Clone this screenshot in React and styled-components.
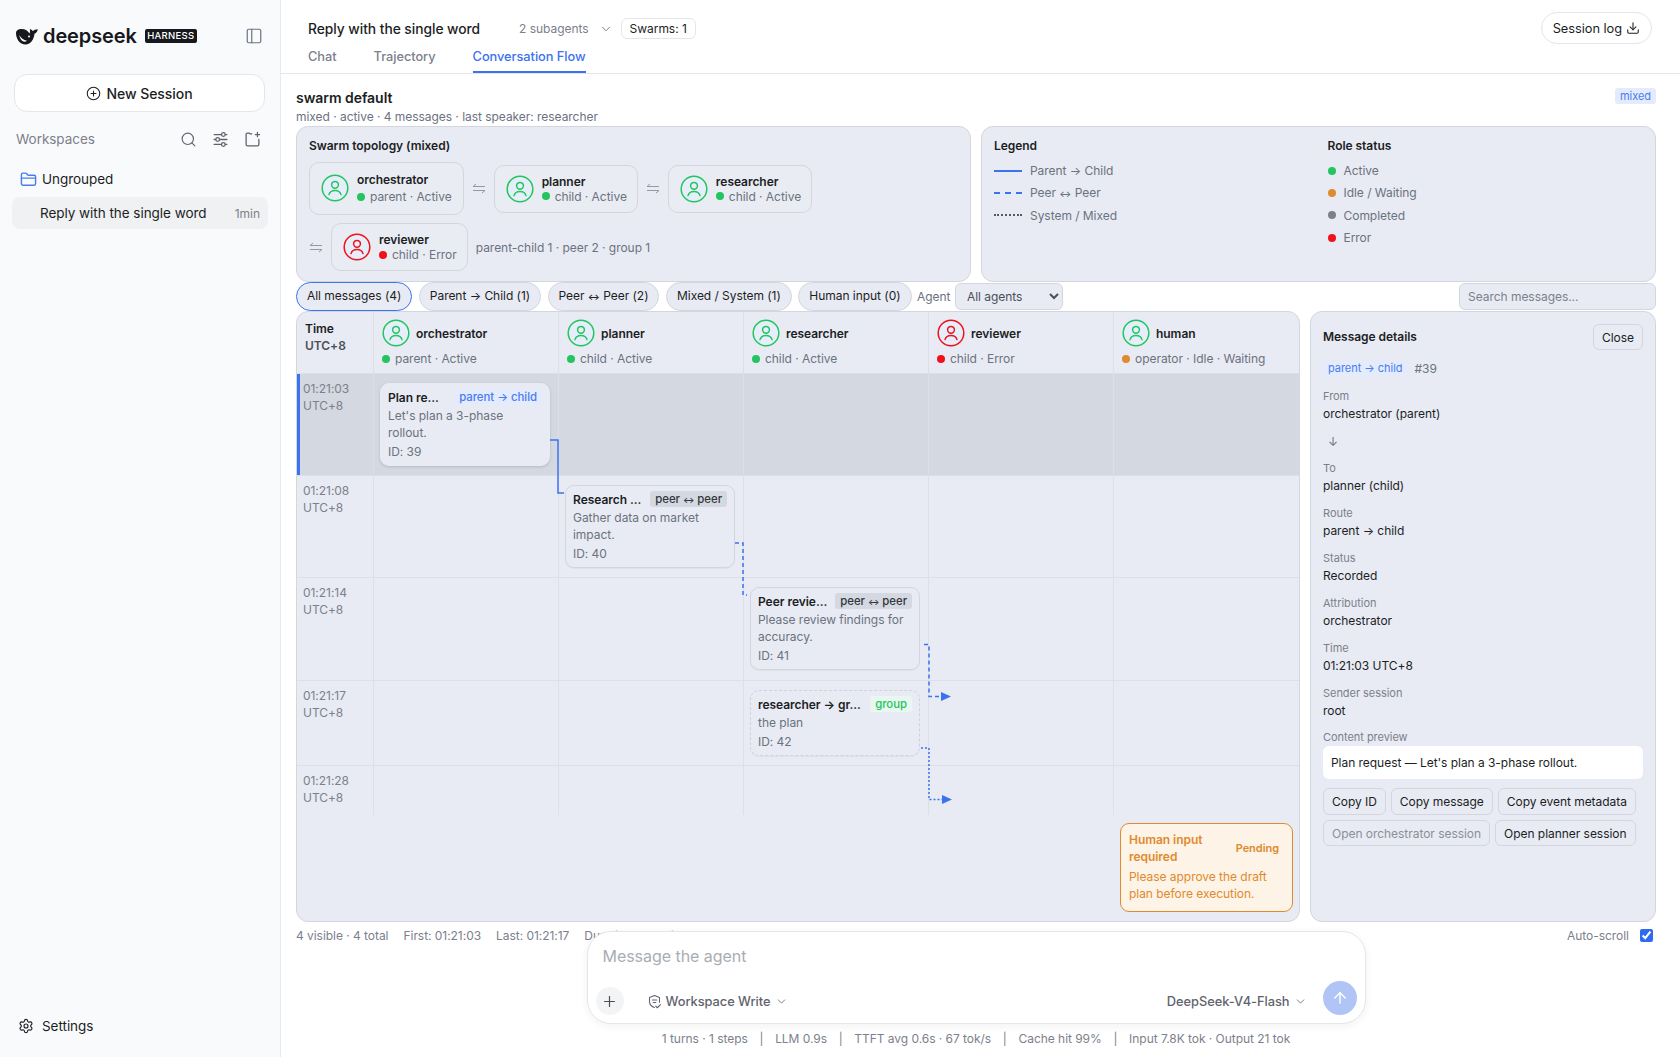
import React from 'react';
import styled, { createGlobalStyle } from 'styled-components';
import {
  ArrowUp,
  ChevronDown,
  CirclePlus,
  Download,
  FolderClosed,
  PanelLeft,
  Plus,
  Search,
  Settings,
} from 'lucide-react';

const BLUE = '#3b72f0';
const GREEN = '#22c55e';
const RED = '#f0121a';
const ORANGE = '#e08a2e';
const GRAY = '#7c808c';
const PANEL = '#e8ebf3';
const LINE = '#d3d6dd';

const Global = createGlobalStyle`
  html, body { margin: 0; height: 100%; overflow: hidden; background: #fff; }
  body { font-family: Inter, "Liberation Sans", sans-serif; color: #1c1e24; font-size: 12px; letter-spacing: -0.04px; }
  button, input, select { letter-spacing: inherit; }
  * { box-sizing: border-box; }
`;

const Page = styled.div`
  display: flex;
  width: 1680px;
  height: 1057px;
`;

/* sidebar */
const Sidebar = styled.aside`
  width: 281px;
  flex: none;
  display: flex;
  flex-direction: column;
  background: #f9fafc;
  border-right: 1px solid #e8e9ec;
`;

const Brand = styled.div`
  display: flex;
  align-items: center;
  height: 18px;
  margin: 27px 17px 0 16px;
`;

const Wordmark = styled.span`
  font-size: 20px;
  font-weight: 600;
  letter-spacing: -0.1px;
  margin-left: 5px;
  line-height: 18px;
  color: #16181d;
`;

const Tag = styled.span`
  margin-left: 8px;
  width: 52px;
  height: 14px;
  border-radius: 2px;
  background: #16181d;
  color: #fff;
  font-size: 9.5px;
  font-weight: 500;
  letter-spacing: 0.3px;
  line-height: 14px;
  text-align: center;
`;

const CollapseBtn = styled.span`
  margin-left: auto;
  display: flex;
  color: #6b7280;
`;

const NewSession = styled.button`
  margin: 29px 15px 0 14px;
  height: 38px;
  border: 1px solid #e5e6ea;
  border-radius: 13px;
  background: #fff;
  font: 500 14px Inter, sans-serif;
  color: #1c1e24;
  display: flex;
  align-items: center;
  justify-content: center;
  gap: 5px;
`;

const WorkspaceHead = styled.div`
  display: flex;
  align-items: center;
  height: 20px;
  margin: 17px 19px 0 16px;
  color: ${GRAY};
  font-size: 13.5px;
`;

const WorkspaceLabel = styled.span`
  flex: 1;
`;

const HeadIcons = styled.span`
  display: flex;
  gap: 15px;
  color: #5f636d;
`;

const GroupRow = styled.div`
  display: flex;
  align-items: center;
  gap: 5px;
  height: 20px;
  margin: 20px 0 0 20px;
  font-size: 13.5px;
`;

const SessionRow = styled.div`
  display: flex;
  align-items: center;
  justify-content: space-between;
  height: 32px;
  margin: 8px 12px 0 12px;
  padding: 0 8px 0 28px;
  border-radius: 8px;
  background: #f0f1f3;
  font-size: 13.5px;
`;

const SessionAge = styled.span`
  font-size: 12px;
  color: ${GRAY};
`;

const SettingsRow = styled.div`
  margin: auto 0 21px 18px;
  display: flex;
  align-items: center;
  gap: 8px;
  font-size: 13.5px;
  height: 20px;
`;

/* main */
const Main = styled.main`
  position: relative;
  flex: 1;
  min-width: 0;
  display: flex;
  flex-direction: column;
`;

const Header = styled.header`
  position: relative;
  height: 74px;
  flex: none;
  border-bottom: 1px solid #e5e6ea;
  padding: 18px 0 0 27px;
`;

const TitleRow = styled.div`
  display: flex;
  align-items: center;
  height: 21px;
`;

const Title = styled.span`
  font-size: 13.8px;
  font-weight: 500;
  margin-right: 39px;
`;

const Subagents = styled.span`
  display: flex;
  align-items: center;
  gap: 10px;
  color: ${GRAY};
  margin-right: 8px;
`;

const SwarmChip = styled.span`
  height: 21px;
  padding: 0 8px;
  border: 1px solid #e5e6ea;
  border-radius: 6px;
  display: flex;
  align-items: center;
`;

const SessionLog = styled.button`
  position: absolute;
  top: 12px;
  right: 28px;
  height: 32px;
  padding: 0 11px;
  display: flex;
  align-items: center;
  gap: 4px;
  background: #fff;
  border: 1px solid #e5e6ea;
  border-radius: 16px;
  font: 12.8px Inter, sans-serif;
  color: #1c1e24;
`;

const Tabs = styled.nav`
  display: flex;
  gap: 37px;
  margin-top: 6px;
`;

const Tab = styled.span`
  height: 28px;
  padding-top: 4px;
  font-size: 12.8px;
  font-weight: 500;
  color: ${(p) => (p.$active ? BLUE : GRAY)};
  border-bottom: ${(p) => (p.$active ? `2px solid ${BLUE}` : '0')};
`;

const Content = styled.div`
  flex: 1;
  min-height: 0;
  padding: 14px 24px 0 15px;
  display: flex;
  flex-direction: column;
`;

const SwarmHead = styled.div`
  display: flex;
  justify-content: space-between;
  align-items: flex-start;
  height: 38px;
`;

const SwarmName = styled.div`
  font-size: 14px;
  font-weight: 600;
  line-height: 20px;
`;

const SwarmMeta = styled.div`
  font-size: 12px;
  line-height: 16px;
  margin-top: 1px;
  color: #6b7280;
`;

const Badge = styled.span`
  display: inline-block;
  height: ${(p) => p.$h || 16}px;
  line-height: ${(p) => p.$h || 16}px;
  padding: 0 5px;
  border-radius: 3px;
  font-size: ${(p) => p.$size || 11}px;
  font-weight: ${(p) => (p.$strong ? 500 : 400)};
  white-space: nowrap;
  flex: none;
  color: ${(p) => p.$fg};
  background: ${(p) => p.$bg};
`;

const PeerArrow = styled.span`
  font-size: 0.75em;
  font-weight: 600;
`;

const TopPanels = styled.div`
  display: grid;
  grid-template-columns: 1fr 1fr;
  grid-template-rows: minmax(0, 1fr);
  gap: 10px;
  height: 156px;
  flex: none;
`;

const Panel = styled.section`
  background: ${PANEL};
  border: 1px solid ${LINE};
  border-radius: 12px;
  padding: 11px 12px 0;
`;

const PanelTitle = styled.div`
  font-size: 12px;
  font-weight: 600;
  line-height: 16px;
`;

const Topology = styled.div`
  display: flex;
  flex-wrap: wrap;
  align-items: center;
  gap: 8px;
  margin-top: 8px;
`;

const TopoGroup = styled.div`
  display: flex;
  align-items: center;
  gap: 8px;
`;

const Node = styled.div`
  display: flex;
  align-items: center;
  gap: 8px;
  padding: ${(p) => (p.$tall ? '9px 11px 10px' : '8px 10px 8px 11px')};
  border: 1px solid ${LINE};
  border-radius: 10px;
  background: #e9ecf3;
`;

const NodeText = styled.div`
  display: flex;
  flex-direction: column;
  gap: ${(p) => (p.$tall ? 2 : 0)}px;
  line-height: 15px;
`;

const Name = styled.div`
  font-size: 12px;
  font-weight: 600;
  line-height: 15px;
`;

const Status = styled.div`
  display: flex;
  align-items: center;
  gap: 5px;
  font-size: 12px;
  line-height: 15px;
  color: #6b7280;
  white-space: nowrap;
`;

const Dot = styled.span`
  width: 8px;
  height: 8px;
  border-radius: 50%;
  flex: none;
  background: ${(p) => p.$color};
`;

const TopoSummary = styled.span`
  color: #6b7280;
`;

const LegendGrid = styled.div`
  display: grid;
  grid-template-columns: 1fr 1fr;
  column-gap: 18px;
`;

const LegendList = styled.div`
  display: flex;
  flex-direction: column;
  margin-top: 5.5px;
`;

const LegendItem = styled.div`
  display: flex;
  align-items: center;
  gap: 8px;
  height: 22.3px;
  color: #6b7280;
`;

const LegendLine = styled.span`
  width: 28px;
  border-top: 2px ${(p) => p.$kind} ${(p) => p.$color};
`;

const Filters = styled.div`
  display: flex;
  align-items: center;
  height: 29px;
  flex: none;
  gap: 6.5px;
`;

const Pill = styled.button`
  height: 29px;
  padding: 0 10px 2px;
  border-radius: 14.500px;
  border: 1px solid ${(p) => (p.$active ? BLUE : LINE)};
  background: ${PANEL};
  font: 12px Inter, sans-serif;
  color: #1c1e24;
  white-space: nowrap;
`;

const AgentLabel = styled.span`
  color: #6b7280;
  margin-left: -1px;
`;

const AgentSelect = styled.select`
  width: 108px;
  height: 27px;
  margin-left: -2px;
  padding-left: 7px;
  border: 1px solid ${LINE};
  border-radius: 6px;
  background: ${PANEL};
  font: 12px Inter, sans-serif;
  color: #4b4f58;
`;

const SearchBox = styled.input`
  margin-left: auto;
  width: 197px;
  height: 27px;
  padding: 0 8px 1px;
  border: 1px solid ${LINE};
  border-radius: 6px;
  background: ${PANEL};
  font: 12px Inter, sans-serif;
  &::placeholder { color: #7c808c; opacity: 1; }
`;

const Workspace = styled.div`
  display: grid;
  grid-template-columns: 1004px 346px;
  gap: 10px;
  height: 611px;
  flex: none;
`;

const FlowPanel = styled.section`
  position: relative;
  background: ${PANEL};
  border: 1px solid ${LINE};
  border-radius: 12px;
  overflow: hidden;
`;

const FlowRow = styled.div`
  display: grid;
  grid-template-columns: 77px repeat(5, minmax(0, 1fr));
  height: ${(p) => p.$h}px;
  background: ${(p) => (p.$selected ? '#d4d8e0' : 'transparent')};
  border-bottom: ${(p) => (p.$end ? '0' : '1px solid #dcdfe7')};
`;

const TimeCell = styled.div`
  padding: ${(p) => (p.$head ? '8px 0 0 5px' : '7px 0 0 3px')};
  border-right: 1px solid #dcdfe7;
  border-left: ${(p) => (p.$selected ? `3px solid ${BLUE}` : '3px solid transparent')};
  line-height: ${(p) => (p.$head ? 17 : 16.5)}px;
  color: ${(p) => (p.$head ? '#4b4f58' : GRAY)};
  font-weight: ${(p) => (p.$head ? 600 : 400)};
`;

const TimeHead = styled.div`
  color: #1c1e24;
`;

const HeadCell = styled.div`
  padding: 7px 0 0 8px;
  border-right: ${(p) => (p.$last ? '0' : '1px solid #dcdfe7')};
`;

const HeadTop = styled.div`
  display: flex;
  align-items: center;
  gap: 6px;
  height: 28px;
  margin-bottom: 4px;
`;

const Cell = styled.div`
  min-width: 0;
  padding: 9px 8px 0 6px;
  border-right: ${(p) => (p.$last ? '0' : '1px solid #dcdfe7')};
`;

const MsgCard = styled.article`
  background: ${PANEL};
  border-radius: 9px;
  padding: 5px 7px;
  border: ${(p) => (p.$variant === 'selected' ? `1px solid ${PANEL}` : p.$variant === 'group' ? `1px dashed #cfd2da` : `1.5px solid ${LINE}`)};
  box-shadow: ${(p) => (p.$variant === 'selected' ? '0 1px 3px rgba(40,50,70,.18)' : '0 1px 1px rgba(40,50,70,.05)')};
`;

const MsgTop = styled.div`
  display: flex;
  align-items: center;
  justify-content: space-between;
  gap: 4px;
  margin-bottom: 2px;
`;

const MsgTitle = styled.span`
  font-weight: 600;
  white-space: nowrap;
`;

const MsgBody = styled.div`
  line-height: 17px;
  color: #6b7280;
`;

const MsgId = styled.div`
  line-height: 17px;
  margin-top: 2px;
  color: #6b7280;
`;

const Connectors = styled.svg`
  position: absolute;
  inset: 0;
  width: 100%;
  height: 100%;
  pointer-events: none;
`;

const HumanCard = styled.div`
  position: absolute;
  right: 6px;
  bottom: 9px;
  width: 173px;
  height: 89px;
  padding: 7px 8px;
  border: 1px solid ${ORANGE};
  border-radius: 9px;
  background: #fdf3e6;
  color: ${ORANGE};
  line-height: 17px;
`;

const HumanTop = styled.div`
  display: flex;
  align-items: center;
  justify-content: space-between;
  margin-bottom: 3px;
`;

const HumanTitle = styled.span`
  width: 96px;
  font-weight: 600;
`;

const Pending = styled.span`
  font-size: 11px;
  font-weight: 600;
  margin-right: 5px;
`;

const Details = styled.section`
  background: ${PANEL};
  border: 1px solid ${LINE};
  border-radius: 12px;
  padding: 12px;
  display: flex;
  flex-direction: column;
  gap: 11.85px;
`;

const DetailsHead = styled.div`
  display: flex;
  align-items: center;
  justify-content: space-between;
  height: 26px;
  margin-bottom: -1px;
`;

const SmallBtn = styled.button`
  height: 26.5px;
  padding: 0 8px;
  border: 1px solid ${LINE};
  border-radius: 6px;
  background: ${PANEL};
  font: 12px Inter, sans-serif;
  color: ${(p) => (p.disabled ? '#8b8f99' : '#1c1e24')};
  white-space: nowrap;
`;

const RouteRow = styled.div`
  display: flex;
  align-items: center;
  gap: 7px;
  color: #6b7280;
  margin-bottom: 1px;
`;

const FieldLabel = styled.div`
  font-size: 11px;
  line-height: 15px;
  color: ${GRAY};
  margin-bottom: 1px;
`;

const FieldValue = styled.div`
  line-height: 17px;
`;

const ArrowDown = styled.div`
  height: 16px;
  line-height: 15px;
  padding-left: 5px;
  color: #6b7280;
`;

const Preview = styled.div`
  height: 33px;
  padding: 0 8px;
  border-radius: 6px;
  background: #fff;
  line-height: 33px;
`;

const Actions = styled.div`
  display: flex;
  flex-wrap: wrap;
  gap: 5px;
  margin-top: -3px;
`;

const StatusBar = styled.div`
  display: flex;
  align-items: center;
  gap: 15px;
  height: 16px;
  margin-top: 5px;
  flex: none;
  color: ${GRAY};
`;

const LiveWord = styled.span`
  color: ${GREEN};
`;

const AutoScroll = styled.label`
  margin-left: auto;
  display: flex;
  align-items: center;
  gap: 11px;
  margin-right: 3px;
`;

const Check = styled.input`
  width: 13px;
  height: 13px;
  margin: 0;
  accent-color: #2f6bf0;
`;

const Dock = styled.div`
  position: absolute;
  left: 15px;
  right: 24px;
  bottom: 10px;
  display: flex;
  flex-direction: column;
  align-items: center;
`;

const Composer = styled.div`
  width: 779px;
  height: 93px;
  padding: 12px 8px 8px;
  background: #fff;
  border: 1px solid #e5e6ea;
  border-radius: 24px;
  box-shadow: 0 2px 8px rgba(30, 40, 60, 0.06);
  display: flex;
  flex-direction: column;
  justify-content: space-between;
`;

const Prompt = styled.input`
  border: 0;
  outline: 0;
  padding: 0 7px;
  height: 24px;
  font: 16px Inter, sans-serif;
  &::placeholder { color: #a9adb5; opacity: 1; }
`;

const ComposerBar = styled.div`
  display: flex;
  align-items: center;
`;

const AddBtn = styled.span`
  width: 28px;
  height: 28px;
  margin-top: 2px;
  border-radius: 50%;
  background: #f3f4f6;
  display: flex;
  align-items: center;
  justify-content: center;
  color: #4b4f58;
`;

const Selector = styled.span`
  display: flex;
  align-items: center;
  gap: 4px;
  margin-top: 2px;
  margin-left: ${(p) => p.$ml};
  font-size: 12.85px;
  font-weight: 500;
  color: #5f636d;
`;

const Send = styled.span`
  width: 34px;
  height: 34px;
  margin-left: 16px;
  margin-top: -4px;
  border-radius: 50%;
  background: #b0c4f5;
  color: #fff;
  display: flex;
  align-items: center;
  justify-content: center;
`;

const Stats = styled.div`
  display: flex;
  gap: 11.7px;
  margin-top: 7px;
  line-height: 16px;
  color: ${GRAY};
`;

const Glyph = styled.svg`
  flex: none;
`;

/* drawings */
const Avatar = ({ color }) => (
  <Glyph width="28" height="28" viewBox="0 0 28 28" fill="none">
    <circle cx="14" cy="14" r="12.8" fill="#e7eefb" stroke={color} strokeWidth="1.5" />
    <circle cx="14" cy="10.8" r="3.4" stroke={color} strokeWidth="1.5" />
    <path d="M8 20.6c.8-2.6 3.1-4 6-4s5.200 1.400 6 4" stroke={color} strokeWidth="1.5" strokeLinecap="round" />
  </Glyph>
);

const Whale = () => (
  <Glyph width="22" height="17" viewBox="0 0 22 17">
    <path
      d="M0 5C0 2.500 2.500 1 5.500 1c3.800 0 6.500 1.800 8 4.500.6-1.200.7-2.800.3-4.500 1.300.3 2.300 1 3 2 .9-.9 2.700-1.700 5-1.800-.3 2-1.400 3.500-3.300 4.600C18 11 15 16.500 9.500 16.500 3.800 16.500 0 11 0 5Z"
      fill="#16181d"
    />
    <path d="M3.200 7c1.700 3 4.200 5 7.800 5.700-.9.9-2.200 1.200-3.500.9C5.400 13 3.800 10.200 3.200 7Z" fill="#f9fafc" />
    <circle cx="13" cy="8.600" r="1" fill="#f9fafc" />
  </Glyph>
);

const Sliders = () => (
  <Glyph width="17" height="17" viewBox="0 0 24 24" fill="none" stroke="currentColor" strokeWidth="1.8" strokeLinecap="round">
    <path d="M3 5h10M19 5h2M3 12h2M11 12h10M3 19h10M19 19h2" />
    <circle cx="16" cy="5" r="2.600" />
    <circle cx="8" cy="12" r="2.600" />
    <circle cx="16" cy="19" r="2.600" />
  </Glyph>
);

const AddFolder = () => (
  <Glyph width="17" height="17" viewBox="0 0 24 24" fill="none" stroke="currentColor" strokeWidth="1.8" strokeLinecap="round" strokeLinejoin="round">
    <path d="M11 4H8.500L7 3H5a2 2 0 0 0-2 2v14a2 2 0 0 0 2 2h14a2 2 0 0 0 2-2v-7" />
    <path d="M19 2v6M16 5h6" />
  </Glyph>
);

const SwapArrows = () => (
  <Glyph width="14" height="11" viewBox="0 0 14 11" fill="none" stroke="#9498a3" strokeWidth="1">
    <path d="M1 3.500h12M1 3.500 4 1M13 7.500H1M13 7.500l-3 2.500" />
  </Glyph>
);

const ShieldMark = () => (
  <Glyph width="15" height="15" viewBox="0 0 24 24" fill="none" stroke="currentColor" strokeWidth="1.7" strokeLinecap="round" strokeLinejoin="round">
    <path d="M12 21.500c-4.500-1.500-8-4.800-8-10v-6l8-3 8 3V13" />
    <path d="M8.500 9.500h7M10 13.500h4M14 19.500l2.500 2.500 5-5" />
  </Glyph>
);

const HEAD = [
  { name: 'orchestrator', status: 'parent · Active', avatar: GREEN, dot: GREEN },
  { name: 'planner', status: 'child · Active', avatar: GREEN, dot: GREEN },
  { name: 'researcher', status: 'child · Active', avatar: GREEN, dot: GREEN },
  { name: 'reviewer', status: 'child · Error', avatar: RED, dot: RED },
  { name: 'human', status: 'operator · Idle · Waiting', avatar: GREEN, dot: ORANGE },
];

const PeerBadge = (
  <>
    peer <PeerArrow>↔</PeerArrow> peer
  </>
);

const ROWS = [
  {
    time: '01:21:03',
    h: 102,
    selected: true,
    col: 0,
    variant: 'selected',
    title: 'Plan re...',
    badge: { text: 'parent → child', fg: '#4a7cf0', bg: '#e3ebfd' },
    body: ["Let's plan a 3-phase", 'rollout.'],
    id: 39,
  },
  {
    time: '01:21:08',
    h: 102,
    col: 1,
    title: 'Research ...',
    badge: { text: PeerBadge, fg: '#33363e', bg: '#d4d8e0' },
    body: ['Gather data on market', 'impact.'],
    id: 40,
  },
  {
    time: '01:21:14',
    h: 103,
    col: 2,
    title: 'Peer revie...',
    badge: { text: PeerBadge, fg: '#33363e', bg: '#d4d8e0' },
    body: ['Please review findings for', 'accuracy.'],
    id: 41,
  },
  {
    time: '01:21:17',
    h: 85,
    col: 2,
    variant: 'group',
    title: 'researcher → gr...',
    badge: { text: 'group', fg: GREEN, bg: '#e9f7f0' },
    body: ['the plan'],
    id: 42,
  },
  { time: '01:21:28', h: 49, end: true },
];

const DETAILS = [
  ['To', 'planner (child)'],
  ['Route', 'parent → child'],
  ['Status', 'Recorded'],
  ['Attribution', 'orchestrator'],
  ['Time', '01:21:03 UTC+8'],
  ['Sender session', 'root'],
];

const Field = ({ label, value }) => (
  <div>
    <FieldLabel>{label}</FieldLabel>
    <FieldValue>{value}</FieldValue>
  </div>
);

const TopoNode = ({ agent, tall }) => (
  <Node $tall={tall}>
    <Avatar color={agent.avatar} />
    <NodeText $tall={tall}>
      <Name>{agent.name}</Name>
      <Status>
        <Dot $color={agent.dot} />
        {agent.status}
      </Status>
    </NodeText>
  </Node>
);

const App = () => (
  <Page>
    <Global />
    <Sidebar>
      <Brand>
        <Whale />
        <Wordmark>deepseek</Wordmark>
        <Tag>HARNESS</Tag>
        <CollapseBtn>
          <PanelLeft size={18} strokeWidth={1.6} />
        </CollapseBtn>
      </Brand>
      <NewSession>
        <CirclePlus size={15} strokeWidth={1.7} />
        New Session
      </NewSession>
      <WorkspaceHead>
        <WorkspaceLabel>Workspaces</WorkspaceLabel>
        <HeadIcons>
          <Search size={17} strokeWidth={1.6} />
          <Sliders />
          <AddFolder />
        </HeadIcons>
      </WorkspaceHead>
      <GroupRow>
        <FolderClosed size={17} strokeWidth={2} color="#4a7cf0" />
        Ungrouped
      </GroupRow>
      <SessionRow>
        Reply with the single word
        <SessionAge>1min</SessionAge>
      </SessionRow>
      <SettingsRow>
        <Settings size={16} strokeWidth={1.7} />
        Settings
      </SettingsRow>
    </Sidebar>

    <Main>
      <Header>
        <TitleRow>
          <Title>Reply with the single word</Title>
          <Subagents>
            2 subagents
            <ChevronDown size={14} strokeWidth={1.7} />
          </Subagents>
          <SwarmChip>Swarms: 1</SwarmChip>
        </TitleRow>
        <Tabs>
          <Tab>Chat</Tab>
          <Tab>Trajectory</Tab>
          <Tab $active>Conversation Flow</Tab>
        </Tabs>
        <SessionLog>
          Session log
          <Download size={14} strokeWidth={1.8} />
        </SessionLog>
      </Header>

      <Content>
        <SwarmHead>
          <div>
            <SwarmName>swarm default</SwarmName>
            <SwarmMeta>mixed · active · 4 messages · last speaker: researcher</SwarmMeta>
          </div>
          <Badge $fg="#4a7cf0" $bg="#e3ebfd">mixed</Badge>
        </SwarmHead>

        <TopPanels>
          <Panel>
            <PanelTitle>Swarm topology (mixed)</PanelTitle>
            <Topology>
              <TopoGroup>
                <TopoNode agent={HEAD[0]} tall />
              </TopoGroup>
              <TopoGroup>
                <SwapArrows />
                <TopoNode agent={HEAD[1]} />
              </TopoGroup>
              <TopoGroup>
                <SwapArrows />
                <TopoNode agent={HEAD[2]} />
              </TopoGroup>
              <TopoGroup>
                <SwapArrows />
                <TopoNode agent={HEAD[3]} />
              </TopoGroup>
              <TopoSummary>parent-child 1 · peer 2 · group 1</TopoSummary>
            </Topology>
          </Panel>
          <Panel>
            <LegendGrid>
              <div>
                <PanelTitle>Legend</PanelTitle>
                <LegendList>
                  <LegendItem><LegendLine $kind="solid" $color={BLUE} />Parent → Child</LegendItem>
                  <LegendItem><LegendLine $kind="dashed" $color={BLUE} /><span>Peer <PeerArrow>↔</PeerArrow> Peer</span></LegendItem>
                  <LegendItem><LegendLine $kind="dotted" $color="#555962" />System / Mixed</LegendItem>
                </LegendList>
              </div>
              <div>
                <PanelTitle>Role status</PanelTitle>
                <LegendList>
                  <LegendItem><Dot $color={GREEN} />Active</LegendItem>
                  <LegendItem><Dot $color={ORANGE} />Idle / Waiting</LegendItem>
                  <LegendItem><Dot $color={GRAY} />Completed</LegendItem>
                  <LegendItem><Dot $color={RED} />Error</LegendItem>
                </LegendList>
              </div>
            </LegendGrid>
          </Panel>
        </TopPanels>

        <Filters>
          <Pill $active>All messages (4)</Pill>
          <Pill>Parent → Child (1)</Pill>
          <Pill>Peer <PeerArrow>↔</PeerArrow> Peer (2)</Pill>
          <Pill>Mixed / System (1)</Pill>
          <Pill>Human input (0)</Pill>
          <AgentLabel>Agent</AgentLabel>
          <AgentSelect defaultValue="all">
            <option value="all">All agents</option>
          </AgentSelect>
          <SearchBox placeholder="Search messages..." />
        </Filters>

        <Workspace>
          <FlowPanel>
            <FlowRow $h={62}>
              <TimeCell $head>
                <TimeHead>Time</TimeHead>
                UTC+8
              </TimeCell>
              {HEAD.map((a, i) => (
                <HeadCell key={a.name} $last={i === 4}>
                  <HeadTop>
                    <Avatar color={a.avatar} />
                    <Name>{a.name}</Name>
                  </HeadTop>
                  <Status>
                    <Dot $color={a.dot} />
                    {a.status}
                  </Status>
                </HeadCell>
              ))}
            </FlowRow>
            {ROWS.map((row) => (
              <FlowRow key={row.time} $h={row.h} $selected={row.selected} $end={row.end}>
                <TimeCell $selected={row.selected}>
                  {row.time}
                  <br />
                  UTC+8
                </TimeCell>
                {[0, 1, 2, 3, 4].map((c) => (
                  <Cell key={c} $last={c === 4}>
                    {row.col === c && (
                      <MsgCard $variant={row.variant}>
                        <MsgTop>
                          <MsgTitle>{row.title}</MsgTitle>
                          <Badge $fg={row.badge.fg} $bg={row.badge.bg} $size={11.4} $strong>
                            {row.badge.text}
                          </Badge>
                        </MsgTop>
                        <MsgBody>
                          {row.body.map((line) => (
                            <div key={line}>{line}</div>
                          ))}
                        </MsgBody>
                        <MsgId>ID: {row.id}</MsgId>
                      </MsgCard>
                    )}
                  </Cell>
                ))}
              </FlowRow>
            ))}
            <Connectors>
              <g fill="none" stroke={BLUE} strokeWidth="1.5">
                <path d="M253 128H261V181H267" />
                <path d="M438 231H446V283H450" strokeDasharray="4 3" />
                <path d="M627 332.500H632V384.500H645" strokeDasharray="4 3" />
                <path d="M624 436H632V487.500H645" strokeDasharray="2 2" />
              </g>
              <path d="M644 380 654 384.500 644 389Z" fill={BLUE} />
              <path d="M645 483 655 487.500 645 492Z" fill={BLUE} />
            </Connectors>
            <HumanCard>
              <HumanTop>
                <HumanTitle>Human input required</HumanTitle>
                <Pending>Pending</Pending>
              </HumanTop>
              Please approve the draft plan before execution.
            </HumanCard>
          </FlowPanel>

          <Details>
            <DetailsHead>
              <PanelTitle>Message details</PanelTitle>
              <SmallBtn>Close</SmallBtn>
            </DetailsHead>
            <RouteRow>
              <Badge $h={15} $fg="#4a7cf0" $bg="#e3ebfd">parent → child</Badge>
              #39
            </RouteRow>
            <Field label="From" value="orchestrator (parent)" />
            <ArrowDown>↓</ArrowDown>
            {DETAILS.map(([label, value]) => (
              <Field key={label} label={label} value={value} />
            ))}
            <div>
              <FieldLabel>Content preview</FieldLabel>
              <Preview>Plan request — Let's plan a 3-phase rollout.</Preview>
            </div>
            <Actions>
              <SmallBtn>Copy ID</SmallBtn>
              <SmallBtn>Copy message</SmallBtn>
              <SmallBtn>Copy event metadata</SmallBtn>
              <SmallBtn disabled>Open orchestrator session</SmallBtn>
              <SmallBtn>Open planner session</SmallBtn>
            </Actions>
          </Details>
        </Workspace>

        <StatusBar>
          <span>4 visible · 4 total</span>
          <span>First: 01:21:03</span>
          <span>Last: 01:21:17</span>
          <span>Duration: 14s · <LiveWord>live</LiveWord></span>
          <AutoScroll>
            Auto-scroll
            <Check type="checkbox" defaultChecked />
          </AutoScroll>
        </StatusBar>
      </Content>

      <Dock>
        <Composer>
          <Prompt placeholder="Message the agent" />
          <ComposerBar>
            <AddBtn>
              <Plus size={17} strokeWidth={1.7} />
            </AddBtn>
            <Selector $ml="23px">
              <ShieldMark />
              Workspace Write
              <ChevronDown size={13} strokeWidth={1.5} />
            </Selector>
            <Selector $ml="auto">
              DeepSeek-V4-Flash
              <ChevronDown size={13} strokeWidth={1.5} />
            </Selector>
            <Send>
              <ArrowUp size={18} strokeWidth={1.8} />
            </Send>
          </ComposerBar>
        </Composer>
        <Stats>
          <span>1 turns · 1 steps</span>
          <span>|</span>
          <span>LLM 0.9s</span>
          <span>|</span>
          <span>TTFT avg 0.6s · 67 tok/s</span>
          <span>|</span>
          <span>Cache hit 99%</span>
          <span>|</span>
          <span>Input 7.8K tok · Output 21 tok</span>
        </Stats>
      </Dock>
    </Main>
  </Page>
);

export default App;
